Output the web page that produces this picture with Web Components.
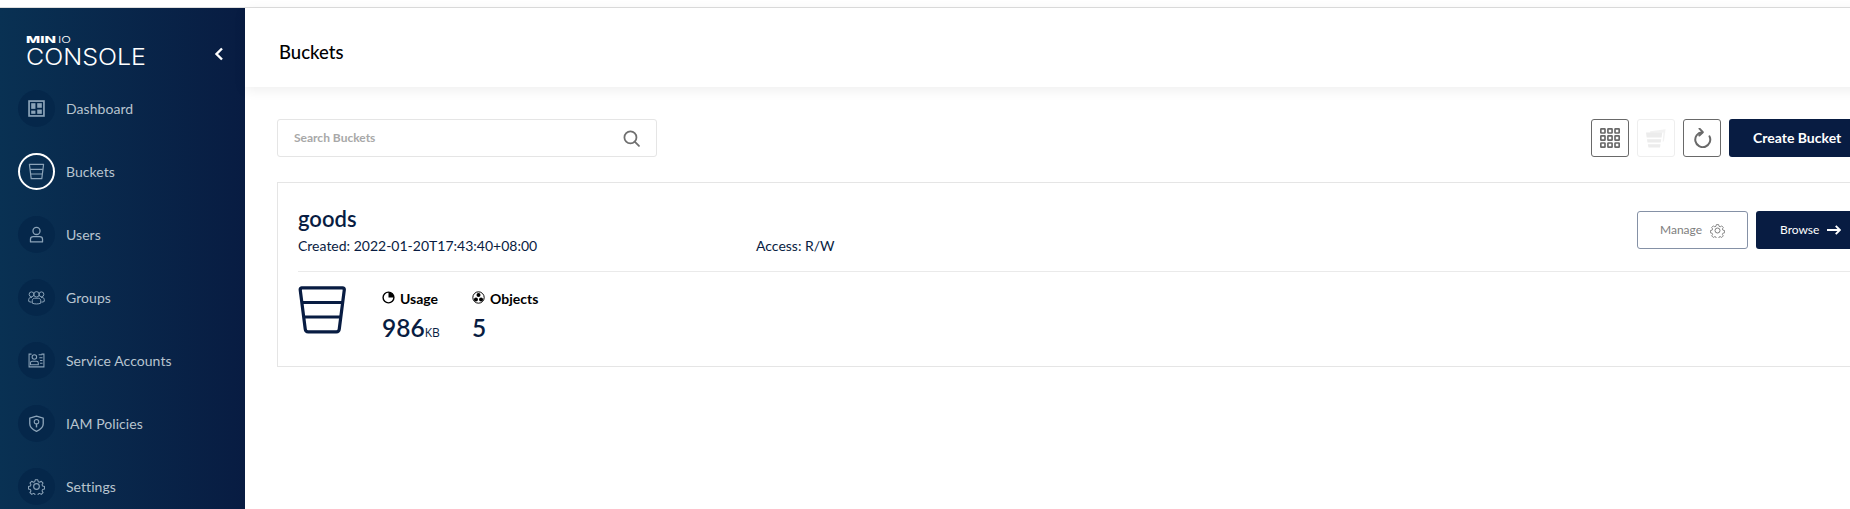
<!doctype html>
<html lang="en">
<head>
<meta charset="utf-8">
<title>Buckets</title>
<style>
  html, body { margin: 0; height: 100%; overflow: hidden; background: #fff; }
  body { font-family: Lato, "Open Sans", sans-serif; }
</style>
</head>
<body>
<mc-app>
  <mc-sidebar slot="sidebar">
    <mc-nav-item label="Dashboard" icon="dashboard"></mc-nav-item>
    <mc-nav-item label="Buckets" icon="bucket" active></mc-nav-item>
    <mc-nav-item label="Users" icon="user"></mc-nav-item>
    <mc-nav-item label="Groups" icon="groups"></mc-nav-item>
    <mc-nav-item label="Service Accounts" icon="account"></mc-nav-item>
    <mc-nav-item label="IAM Policies" icon="shield"></mc-nav-item>
    <mc-nav-item label="Settings" icon="gear"></mc-nav-item>
  </mc-sidebar>
  <mc-header slot="header">Buckets</mc-header>
  <mc-toolbar>
    <mc-search placeholder="Search Buckets"></mc-search>
    <mc-icon-button slot="actions" icon="grid"></mc-icon-button>
    <mc-icon-button slot="actions" icon="stack" disabled></mc-icon-button>
    <mc-icon-button slot="actions" icon="refresh"></mc-icon-button>
    <mc-button slot="actions" variant="create">Create Bucket</mc-button>
  </mc-toolbar>
  <mc-bucket-card name="goods" created="2022-01-20T17:43:40+08:00" access="R/W">
    <mc-button slot="actions" variant="outline" icon="gear">Manage</mc-button>
    <mc-button slot="actions" variant="solid" icon="arrow">Browse</mc-button>
    <mc-stat icon="pie" label="Usage" value="986" unit="KB"></mc-stat>
    <mc-stat icon="objects" label="Objects" value="5"></mc-stat>
  </mc-bucket-card>
</mc-app>

<script>
const icons = {
  dashboard: `<rect x="1.500" y="1.500" width="21" height="21" fill="none" stroke="currentColor" stroke-width="2.400"/><rect x="4.500" y="4.500" width="6" height="8"/><rect x="4.500" y="15" width="6" height="4.500"/><rect x="13" y="4.500" width="6.500" height="6.500"/><rect x="13" y="13.500" width="6.500" height="6"/>`,
  bucket: `<g fill="none" stroke="currentColor" stroke-width="1.700" stroke-linejoin="round"><path d="M2 2h20l-2.500 20h-15z"/><path d="M3 9h18M4 15.500h16"/></g>`,
  user: `<g fill="none" stroke="currentColor" stroke-width="1.800"><circle cx="12" cy="7" r="5"/><path d="M3.500 22.500v-4c0-2 2-3.500 4-3.500h9c2 0 4 1.500 4 3.500v4z" stroke-linejoin="round"/></g>`,
  groups: `<g fill="none" stroke="currentColor" stroke-width="1.400"><circle cx="12" cy="7.500" r="3.800"/><circle cx="5" cy="7.500" r="3.400"/><circle cx="19" cy="7.500" r="3.400"/><path d="M6 20v-3.500c0-2 1.500-3.500 3.500-3.500h5c2 0 3.500 1.500 3.500 3.500V20c-3 1.500-9 1.500-12 0z"/><path d="M5.500 12H4c-2 0-3 1.500-3 3v2.500c1 .8 2.500 1 4 1M18.500 12H20c2 0 3 1.500 3 3v2.500c-1 .8-2.500 1-4 1"/></g>`,
  account: `<g fill="none" stroke="currentColor" stroke-width="1.500"><path d="M5 3H1.500v18h21V3H19"/><circle cx="9" cy="7" r="3.200"/><path d="M3.500 18v-2.500c0-1.500 1.200-2.500 2.500-2.500h6c1.300 0 2.500 1 2.500 2.500V18z"/><path d="M15 4h5M16 8h4.500M17 12h3.500M17 16h3.500"/></g>`,
  shield: `<path d="M12 1.500 21.500 4.500v8c0 5-4.500 8.500-9.500 10.500-5-2-9.500-5.500-9.500-10.500v-8z" fill="none" stroke="currentColor" stroke-width="1.900" stroke-linejoin="round"/><circle cx="12" cy="9.500" r="3.200" fill="none" stroke="currentColor" stroke-width="1.500"/><path d="M12 12v5.500" stroke="currentColor" stroke-width="2"/>`,
  gear: `<g fill="none" stroke="currentColor" stroke-width="1.600" stroke-linejoin="round"><path d="M10 1.500h4l.7 3 2.100.9 2.700-1.600 2.800 2.800-1.600 2.700.9 2.100 3 .7v4l-3 .7-.9 2.100 1.600 2.700-2.800 2.800-2.700-1.600-2.100.9-.7 3h-4l-.7-3-2.100-.9-2.700 1.600-2.800-2.800 1.600-2.700-.9-2.100-3-.7v-4l3-.7.9-2.100L1.700 6.600l2.800-2.800 2.700 1.600 2.100-.9z" transform="translate(1.200 1.200) scale(.9)"/><circle cx="12" cy="12" r="4"/></g>`,
  search: `<g fill="none" stroke="currentColor" stroke-width="2.500"><circle cx="10.500" cy="10.500" r="8.500"/><path d="m16.500 16.500 6 6" stroke-linecap="round"/></g>`,
  grid: `<g fill="none" stroke="currentColor" stroke-width="2"><rect x="1" y="1" width="5" height="5" rx=".5"/><rect x="9.500" y="1" width="5" height="5" rx=".5"/><rect x="18" y="1" width="5" height="5" rx=".5"/><rect x="1" y="9.500" width="5" height="5" rx=".5"/><rect x="9.500" y="9.500" width="5" height="5" rx=".5"/><rect x="18" y="9.500" width="5" height="5" rx=".5"/><rect x="1" y="18" width="5" height="5" rx=".5"/><rect x="9.500" y="18" width="5" height="5" rx=".5"/><rect x="18" y="18" width="5" height="5" rx=".5"/></g>`,
  stack: `<path d="M5 4 23.500 1.500 21.500 16l-1.500.5L21 5.500 5 6z" opacity=".7"/><path d="M0 5.500h19.500l-.8 6H.8zM1.200 13.500h17.100l-.6 4H1.800zM2.200 19.500h15.200l-.6 4H3z"/>`,
  refresh: `<g fill="none" stroke="currentColor" stroke-width="2.400" stroke-linecap="round" stroke-linejoin="round"><path d="M12 5A9 9 0 1 0 21 10"/><path d="M9 .8 13 5 8.800 9"/></g>`,
  arrow: `<path d="M0 12h22M15 5l7 7-7 7" fill="none" stroke="currentColor" stroke-width="3.200"/>`,
  pie: `<circle cx="12" cy="12" r="10" fill="none" stroke="currentColor" stroke-width="2.600"/><path d="M12 12V2a10 10 0 0 1 10 10z"/>`,
  objects: `<circle cx="12" cy="12" r="10.500" fill="none" stroke="currentColor" stroke-width="1.800"/><circle cx="12" cy="7.500" r="3.700"/><circle cx="7.300" cy="15.500" r="3.700"/><circle cx="16.700" cy="15.500" r="3.700"/>`,
};

const svgIcon = (name) =>
  `<svg viewBox="0 0 24 24" fill="currentColor" aria-hidden="true">${icons[name]}</svg>`;

class McElement extends HTMLElement {
  constructor() {
    super();
    this.attachShadow({ mode: "open" });
    this.shadowRoot.innerHTML = this.render();
  }

  attr(name) {
    return this.getAttribute(name) ?? "";
  }
}

class McApp extends McElement {
  render() {
    return `
      <style>
        :host { display: block; width: 1879px; height: 509px; }
        .strip { height: 7px; background: #fff; border-bottom: 1px solid #dedede; }
        .layout { display: grid; grid-template-columns: 245px 1fr; height: 501px; }
        main { min-width: 0; }
        .content { display: grid; gap: 25px; padding: 32px 0 0 32px; }
      </style>
      <div class="strip"></div>
      <div class="layout">
        <slot name="sidebar"></slot>
        <main>
          <slot name="header"></slot>
          <div class="content"><slot></slot></div>
        </main>
      </div>`;
  }
}

class McSidebar extends McElement {
  render() {
    return `
      <style>
        :host {
          display: block;
          height: 501px;
          overflow: hidden;
          background: linear-gradient(90deg, #093153 0%, #081c42 100%);
        }
        .top {
          display: flex;
          align-items: flex-start;
          justify-content: space-between;
          height: 69px;
          box-sizing: border-box;
          padding: 22px 21px 0 25px;
          color: #fff;
        }
        .logo { display: block; width: 124px; height: 44px; }
        .logo text { fill: #fff; font-family: Inter, "Open Sans", sans-serif; }
        .collapse { width: 10px; height: 14px; margin-top: 17px; }
        nav { display: grid; grid-auto-rows: 63px; }
      </style>
      <div class="top">
        <svg class="logo" viewBox="0 0 124 44">
          <text x="1" y="13" font-size="9.500" font-weight="800" textLength="30" lengthAdjust="spacingAndGlyphs">MIN</text>
          <text x="33" y="13" font-size="9.500" font-weight="300" textLength="13" lengthAdjust="spacingAndGlyphs">IO</text>
          <text x="1" y="35" font-size="23" font-weight="300" textLength="120" lengthAdjust="spacingAndGlyphs">CONSOLE</text>
        </svg>
        <svg class="collapse" viewBox="0 0 10 14"><path d="M8 1.500 2.500 7 8 12.500" fill="none" stroke="#fff" stroke-width="2.400"/></svg>
      </div>
      <nav><slot></slot></nav>`;
  }
}

class McNavItem extends McElement {
  render() {
    return `
      <style>
        :host {
          display: flex;
          align-items: center;
          gap: 11px;
          padding-left: 18px;
          color: #b8c4cf;
          font: 400 14px/20px Lato, sans-serif;
          letter-spacing: .06px;
        }
        .badge {
          display: grid;
          place-items: center;
          box-sizing: border-box;
          width: 37px;
          height: 37px;
          border-radius: 50%;
          background: #05274a;
          color: #8ba3b8;
        }
        svg { width: 17px; height: 17px; }
        :host([active]) .badge { background: transparent; border: 2px solid #fff; }
      </style>
      <span class="badge">${svgIcon(this.attr("icon"))}</span>
      <span>${this.attr("label")}</span>`;
  }
}

class McHeader extends McElement {
  render() {
    return `
      <style>
        :host {
          display: flex;
          align-items: center;
          box-sizing: border-box;
          height: 79px;
          padding: 9px 0 0 34px;
          background: #fff;
          color: #000;
          font: 500 18.500px/24px Lato, sans-serif;
          box-shadow: 0 3px 12px rgba(0, 0, 0, .07);
        }
      </style>
      <slot></slot>`;
  }
}

class McToolbar extends McElement {
  render() {
    return `
      <style>
        :host { display: flex; align-items: center; justify-content: space-between; height: 38px; }
        .actions { display: flex; gap: 8px; }
      </style>
      <slot></slot>
      <div class="actions"><slot name="actions"></slot></div>`;
  }
}

class McSearch extends McElement {
  render() {
    return `
      <style>
        :host {
          display: flex;
          align-items: center;
          justify-content: space-between;
          box-sizing: border-box;
          width: 380px;
          height: 38px;
          padding: 0 16px;
          border: 1px solid #e5e5e5;
          border-radius: 3px;
          background: #fff;
        }
        span { color: #a8a8a8; font: 700 12px/16px Lato, sans-serif; }
        svg { width: 17px; height: 17px; color: #6f6f6f; }
      </style>
      <span>${this.attr("placeholder")}</span>
      ${svgIcon("search")}`;
  }
}

class McIconButton extends McElement {
  render() {
    return `
      <style>
        :host {
          display: grid;
          place-items: center;
          box-sizing: border-box;
          width: 38px;
          height: 38px;
          border: 1px solid #696969;
          border-radius: 3px;
          color: #696969;
        }
        :host([disabled]) { border-color: #eee; color: #ececec; }
        svg { width: 20px; height: 20px; }
      </style>
      ${svgIcon(this.attr("icon"))}`;
  }
}

class McButton extends McElement {
  render() {
    const icon = this.attr("icon");
    return `
      <style>
        :host {
          display: inline-flex;
          align-items: center;
          gap: 8px;
          box-sizing: border-box;
          height: 38px;
          border-radius: 3px;
          font: 400 12px/16px Lato, sans-serif;
        }
        :host([variant="create"]) {
          width: 150px;
          padding-left: 24px;
          background: #081c42;
          color: #fff;
          font: 700 14px/20px Lato, sans-serif;
        }
        :host([variant="solid"]) {
          width: 122px;
          padding-left: 24px;
          background: #081c42;
          color: #fff;
        }
        :host([variant="solid"]) svg { width: 14px; height: 14px; }
        :host([variant="outline"]) {
          width: 111px;
          padding-left: 22px;
          border: 1px solid #8591a6;
          background: #fff;
          color: #7e7e7e;
        }
        svg { width: 15px; height: 15px; }
      </style>
      <slot></slot>
      ${icon ? svgIcon(icon) : ""}`;
  }
}

class McBucketCard extends McElement {
  render() {
    return `
      <style>
        :host {
          display: block;
          box-sizing: border-box;
          height: 185px;
          padding: 23px 0 0 20px;
          border: 1px solid #e5e5e5;
          color: #081c42;
        }
        .head {
          display: flex;
          justify-content: space-between;
          height: 65px;
          border-bottom: 1px solid #eaeaea;
        }
        h1 { margin: 0; font: 600 22px/26px Lato, sans-serif; }
        .meta {
          display: grid;
          grid-template-columns: 458px auto;
          margin-top: 5px;
          font: 400 14px/18px Lato, sans-serif;
        }
        .actions { display: flex; gap: 8px; margin-top: 5px; }
        .body { display: flex; padding-top: 14px; }
        .bucket { width: 48px; height: 48px; }
        .stats { display: grid; grid-template-columns: 90px auto; margin: 3px 0 0 36px; }
      </style>
      <div class="head">
        <div>
          <h1>${this.attr("name")}</h1>
          <div class="meta">
            <span>Created: ${this.attr("created")}</span>
            <span>Access: ${this.attr("access")}</span>
          </div>
        </div>
        <div class="actions"><slot name="actions"></slot></div>
      </div>
      <div class="body">
        <svg class="bucket" viewBox="0 0 48 48" fill="none" stroke="currentColor" stroke-width="3.200" stroke-linejoin="round">
          <path d="M3.500 1.800h41q2 0 1.800 2l-5 39q-.3 3-3 3H10.200q-2.700 0-3-3l-5-39q-.2-2 1.800-2z"/>
          <path d="M4 16.500h40M6 31h36"/>
        </svg>
        <div class="stats"><slot></slot></div>
      </div>`;
  }
}

class McStat extends McElement {
  render() {
    const unit = this.attr("unit");
    return `
      <style>
        :host { display: block; color: #081c42; }
        .label {
          display: flex;
          align-items: center;
          gap: 5px;
          color: #000;
          font: 700 14px/20px Lato, sans-serif;
        }
        svg { width: 13px; height: 13px; margin-top: -3px; }
        .value { margin-top: 3px; font: 600 24.500px/32px Lato, sans-serif; }
        small { font: 400 12px/1 "Open Sans", sans-serif; }
      </style>
      <div class="label">${svgIcon(this.attr("icon"))}${this.attr("label")}</div>
      <div class="value">${this.attr("value")}${unit ? `<small>${unit}</small>` : ""}</div>`;
  }
}

customElements.define("mc-app", McApp);
customElements.define("mc-sidebar", McSidebar);
customElements.define("mc-nav-item", McNavItem);
customElements.define("mc-header", McHeader);
customElements.define("mc-toolbar", McToolbar);
customElements.define("mc-search", McSearch);
customElements.define("mc-icon-button", McIconButton);
customElements.define("mc-button", McButton);
customElements.define("mc-bucket-card", McBucketCard);
customElements.define("mc-stat", McStat);
</script>
</body>
</html>
